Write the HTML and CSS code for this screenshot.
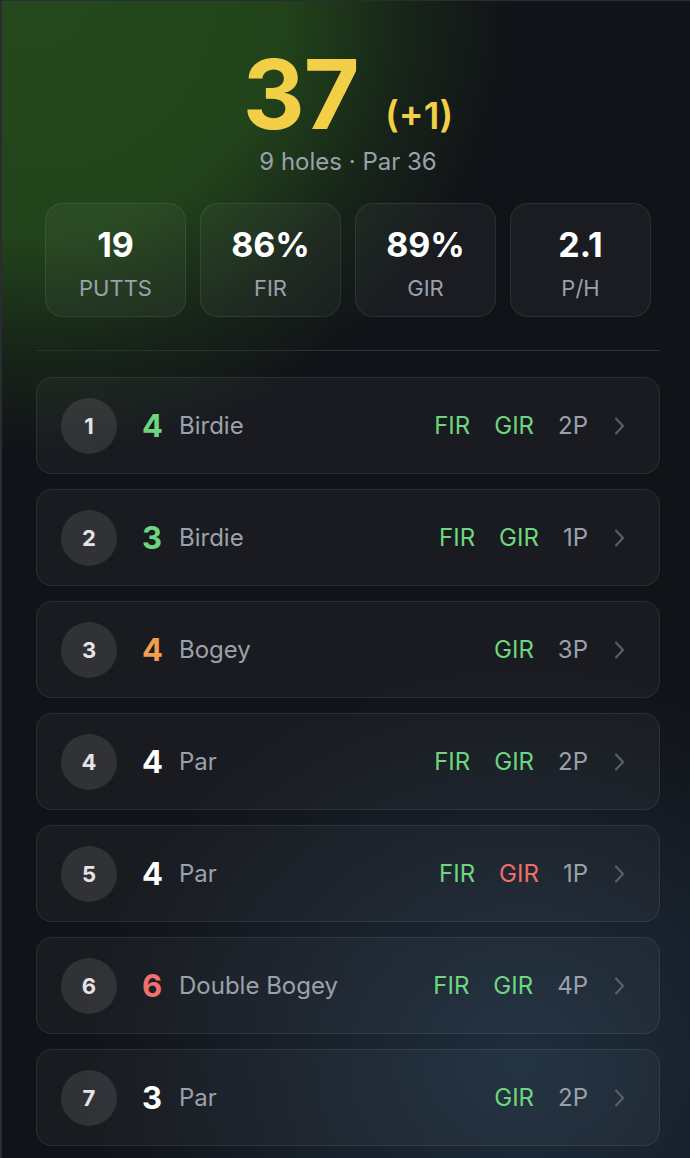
FILE: index.html
```html
<!DOCTYPE html>
<html lang="en">
<head>
    <meta charset="UTF-8">
    <meta name="viewport" content="width=device-width, initial-scale=1.0">
    <title>Round Summary</title>
    <link rel="stylesheet" href="styles.css">
</head>
<body>
    <div class="panel">
        <div class="hero">
            <div class="score-line">
                <span class="total">37</span>
                <span class="to-par">(+1)</span>
            </div>
            <div class="subtitle">9 holes · Par 36</div>
        </div>

        <div class="stats">
            <div class="stat">
                <div class="stat-value">19</div>
                <div class="stat-label">PUTTS</div>
            </div>
            <div class="stat">
                <div class="stat-value">86%</div>
                <div class="stat-label">FIR</div>
            </div>
            <div class="stat">
                <div class="stat-value">89%</div>
                <div class="stat-label">GIR</div>
            </div>
            <div class="stat">
                <div class="stat-value">2.1</div>
                <div class="stat-label">P/H</div>
            </div>
        </div>

        <div class="divider"></div>

        <!-- holes get rendered here -->
        <div id="holeList" class="hole-list"></div>
    </div>

    <script>
        const holes = [
            { num: 1, strokes: 4, result: "Birdie", fir: true, gir: true, putts: 2 },
            { num: 2, strokes: 3, result: "Birdie", fir: true, gir: true, putts: 1 },
            { num: 3, strokes: 4, result: "Bogey", fir: null, gir: true, putts: 3 },
            { num: 4, strokes: 4, result: "Par", fir: true, gir: true, putts: 2 },
            { num: 5, strokes: 4, result: "Par", fir: true, gir: false, putts: 1 },
            { num: 6, strokes: 6, result: "Double Bogey", fir: true, gir: true, putts: 4 },
            { num: 7, strokes: 3, result: "Par", fir: null, gir: true, putts: 2 }
        ];

        const resultClass = {
            "Birdie": "birdie",
            "Par": "par",
            "Bogey": "bogey",
            "Double Bogey": "double"
        };

        function tag(label, value) {
            if (value === null) return '';
            return `<span class="tag ${value ? 'hit' : 'miss'}">${label}</span>`;
        }

        const list = document.getElementById('holeList');
        holes.forEach(hole => {
            const row = document.createElement('div');
            row.className = 'hole';
            row.innerHTML = `
                <div class="hole-num">${hole.num}</div>
                <div class="strokes ${resultClass[hole.result]}">${hole.strokes}</div>
                <div class="result">${hole.result}</div>
                <div class="tags">
                    ${tag('FIR', hole.fir)}
                    ${tag('GIR', hole.gir)}
                    <span class="tag putts">${hole.putts}P</span>
                </div>
                <svg class="chevron" width="12" height="20" viewBox="0 0 12 20">
                    <path d="M3 2.5 L10 10 L3 17.5" fill="none" stroke="currentColor" stroke-width="2" stroke-linecap="round" stroke-linejoin="round"/>
                </svg>
            `;
            list.appendChild(row);
        });
    </script>
</body>
</html>
```

FILE: styles.css
```css
body {
    margin: 0;
    padding: 0;
    background-color: #111318;
    font-family: Inter, "Noto Sans", sans-serif;
    color: #fff;
}
.panel {
    min-height: 1158px;
    box-sizing: border-box;
    border-left: 2px solid #2a2c31;
    border-top: 1px solid #2a2c31;
    padding: 0 30px 40px 34px;
    background:
        radial-gradient(ellipse 480px 450px at 30px 0px, #24491c 0%, rgba(35, 70, 27, 0.95) 52%, rgba(30, 58, 25, 0.45) 78%, rgba(17, 19, 24, 0) 100%),
        radial-gradient(ellipse 440px 400px at 520px 1060px, rgba(32, 50, 68, 0.85), rgba(17, 19, 24, 0) 100%),
        #111318;
}
.hero {
    text-align: center;
    padding-top: 45px;
}
.score-line {
    height: 96px;
    line-height: 96px;
}
.total {
    font-size: 96px;
    font-weight: 700;
    color: #f3ce47;
    letter-spacing: -1px;
}
.to-par {
    font-size: 37px;
    font-weight: 600;
    color: #f3ce47;
    margin-left: 22px;
}
.subtitle {
    margin-top: 6px;
    font-size: 24px;
    line-height: 28px;
    color: #9ba1ab;
}
.stats {
    display: grid;
    grid-template-columns: repeat(4, 1fr);
    gap: 14px;
    margin: 27px 9px 0;
}
.stat {
    height: 114px;
    box-sizing: border-box;
    padding-top: 21px;
    text-align: center;
    border: 1px solid rgba(255, 255, 255, 0.08);
    border-radius: 18px;
    background-color: rgba(255, 255, 255, 0.04);
}
.stat-value {
    font-size: 34px;
    line-height: 40px;
    font-weight: 700;
    color: #fff;
}
.stat-label {
    margin-top: 9px;
    font-size: 22px;
    line-height: 28px;
    color: #9ba1ab;
}
.divider {
    height: 1px;
    background-color: #2c3035;
    margin: 33px 0 26px;
}
.hole-list {
    display: flex;
    flex-direction: column;
    gap: 15px;
}
.hole {
    display: flex;
    align-items: center;
    height: 97px;
    box-sizing: border-box;
    padding: 0 34px 0 24px;
    border: 1px solid rgba(255, 255, 255, 0.08);
    border-radius: 16px;
    background-color: rgba(255, 255, 255, 0.035);
}
.hole-num {
    width: 56px;
    height: 56px;
    border-radius: 50%;
    background-color: rgba(255, 255, 255, 0.1);
    display: flex;
    align-items: center;
    justify-content: center;
    font-size: 22px;
    font-weight: 700;
    color: #e4e4e7;
}
.strokes {
    width: 37px;
    margin-left: 25px;
    font-size: 31px;
    font-weight: 700;
}
.strokes.birdie { color: #6dd67f; }
.strokes.par { color: #fff; }
.strokes.bogey { color: #f0a04b; }
.strokes.double { color: #ef706c; }
.result {
    font-size: 24px;
    color: #9ba1ab;
}
.tags {
    margin-left: auto;
    display: flex;
    gap: 24px;
    font-size: 24px;
}
.tag.hit { color: #6dd67f; }
.tag.miss { color: #ec6f6c; }
.tag.putts { color: #9ba1ab; }
.chevron {
    margin-left: 25px;
    color: #5b616b;
}
```
